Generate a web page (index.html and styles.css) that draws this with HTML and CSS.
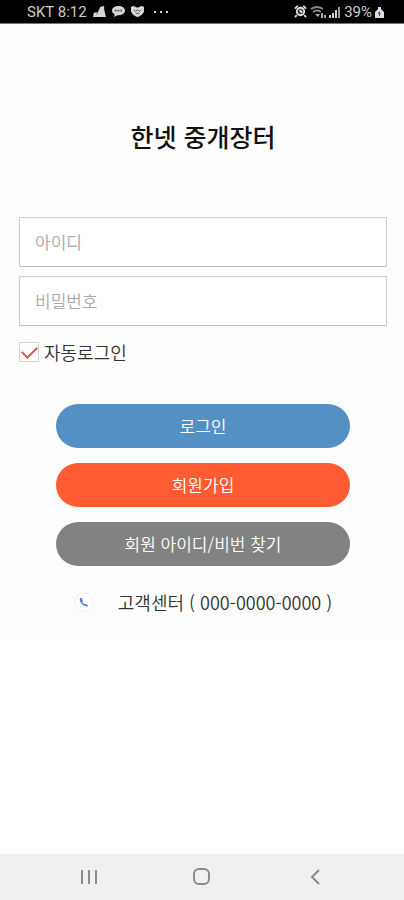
FILE: index.html
```html
<!DOCTYPE html>
<html lang="ko">
<head>
<meta charset="utf-8">
<meta name="viewport" content="width=device-width, initial-scale=1">
<title>한넷 중개장터</title>
<link rel="stylesheet" href="styles.css">
</head>
<body>
<header class="status">
  <div class="status-group">
    <span>SKT 8:12</span>
    <svg class="status-icon" viewBox="0 0 14 14" aria-hidden="true"><path fill="#d6d6d6" d="M0 13 1 8 5 8 8 2 12 1 12 5 14 13Z"/><path d="M3 11 6 8" stroke="#888"/></svg>
    <svg class="status-icon" viewBox="0 0 14 14" aria-hidden="true"><path fill="#d6d6d6" d="M7 1C3 1 0 3 0 6c0 2 1 3 3 4l-1 3 4-2h1c4 0 7-2 7-5S11 1 7 1Z"/><path d="M3 6h8" stroke="#555" stroke-width="2" stroke-dasharray="2 1"/></svg>
    <svg class="status-icon" viewBox="0 0 14 14" aria-hidden="true"><path fill="#d6d6d6" d="M0 2l3-1 4 2 4-2 3 1v5c-1 3-4 5-7 6-3-1-6-3-7-6Z"/><path d="M3 5l2 2 2-2 2 2 2-2M5 9h4" fill="none" stroke="#555"/></svg>
    <svg class="status-more" viewBox="0 0 14 14" aria-hidden="true"><path fill="#d6d6d6" d="M0 6h2v2H0zM6 6h2v2H6zM12 6h2v2h-2z"/></svg>
  </div>
  <div class="status-group status-right">
    <svg class="status-icon" viewBox="0 0 14 14" aria-hidden="true"><circle cx="7" cy="7" r="4" fill="#333" stroke="#e0e0e0" stroke-width="2"/><path d="M1 4l3-3M13 4l-3-3M3 11l-2 2M11 11l2 2M7 5v2l2 1" fill="none" stroke="#e0e0e0" stroke-width="2"/></svg>
    <svg class="status-wifi" viewBox="0 0 16 14" aria-hidden="true"><path d="M1 4q6-4 12 0M3 7q4-3 8 0" fill="none" stroke="#888" stroke-width="2"/><path fill="#aaa" d="M5 9h5l-2 3zM11 8h2v5h-2zM14 10h2v3h-2z"/></svg>
    <svg class="status-signal" viewBox="0 0 12 14" aria-hidden="true"><path d="M1 10v3M4 8v5M7 5v8" stroke="#ccc" stroke-width="2"/><path d="M10 2v11" stroke="#999" stroke-width="2"/></svg>
    <span>39%</span>
    <svg class="status-battery" viewBox="0 0 9 14" aria-hidden="true"><path fill="#ddd" d="M3 2h3v2l3 3v6H0V7l3-3z"/><path fill="#555" d="M4 6 6 9H5v2H4V9H3z"/></svg>
  </div>
</header>
<main class="page">
  <form class="login">
    <h1 class="title">한넷 중개장터</h1>
    <div class="fields">
      <input class="field" type="text" placeholder="아이디" aria-label="아이디">
      <input class="field" type="password" placeholder="비밀번호" aria-label="비밀번호">
    </div>
    <label class="auto"><input class="check" type="checkbox" checked>자동로그인</label>
    <div class="actions">
      <button class="button blue" type="submit">로그인</button>
      <button class="button orange" type="button">회원가입</button>
      <button class="button gray" type="button">회원 아이디/비번 찾기</button>
    </div>
    <a class="support" href="tel:000-0000-0000">
      <svg class="phone" viewBox="0 0 20 20" aria-hidden="true"><circle cx="10" cy="10" r="9" fill="#fff" stroke="#eeeff2"/><path fill="#5585cf" d="M6 6l2 0 1 3-1 1 2 2 1 0 3 1 0 1c-1 1-3 0-5-1-2-2-4-4-3-7Z"/></svg>
      <span>고객센터 ( 000-0000-0000 )</span>
    </a>
  </form>
</main>
<nav class="system">
  <button class="system-key" type="button" aria-label="최근 앱"><svg class="key-icon" viewBox="0 0 18 18"><path d="M2 2v14M9 2v14M16 2v14" stroke="#8c8c8c" stroke-width="2"/></svg></button>
  <button class="system-key" type="button" aria-label="홈"><svg class="key-icon" viewBox="0 0 18 18"><rect x="1" y="1" width="15" height="15" rx="5" fill="none" stroke="#8c8c8c" stroke-width="2"/></svg></button>
  <button class="system-key" type="button" aria-label="뒤로"><svg class="key-icon" viewBox="0 0 18 18"><path d="M13 2 6 9l7 7" fill="none" stroke="#8c8c8c" stroke-width="2"/></svg></button>
</nav>
</body>
</html>
```
FILE: styles.css
```css
* {
  box-sizing: border-box;
}

body {
  margin: 0;
  min-height: 100vh;
  display: flex;
  flex-direction: column;
  background: #fff;
  color: #333;
  font-family: "Noto Sans CJK KR", sans-serif;
  font-weight: 350;
  font-size: 17px;
}

input,
button {
  font: inherit;
}

.status {
  height: 24px;
  padding: 0 20px 0 27px;
  display: flex;
  justify-content: space-between;
  align-items: center;
  background: #000;
  border-bottom: 1px solid #777;
  color: #ccc;
  font-family: Roboto, sans-serif;
  font-weight: 400;
  font-size: 15px;
  line-height: 24px;
}

.status-group {
  display: flex;
  align-items: center;
  gap: 6px;
}

.status-right {
  gap: 3px;
}

.status-icon {
  width: 13px;
  height: 13px;
}

.status-more {
  width: 14px;
  height: 14px;
  margin-left: 4px;
}

.status-wifi {
  width: 16px;
  height: 14px;
}

.status-signal {
  width: 12px;
  height: 14px;
}

.status-battery {
  width: 9px;
  height: 14px;
}

.page {
  flex: 1;
}

.login {
  padding: 92px 17px 20px 19px;
  background: #fdfdfd;
}

.title {
  margin: 0;
  color: #111;
  font-size: 25px;
  font-weight: 500;
  line-height: 40px;
  text-align: center;
}

.fields {
  margin-top: 61px;
  display: grid;
  gap: 9px;
}

.field {
  width: 100%;
  height: 50px;
  padding: 0 15px 2px;
  border: 1px solid #ccc;
  border-bottom-color: #bbb;
  border-radius: 1px;
  background: #fff;
  outline: 0;
}

.field::placeholder {
  color: #aaa;
  opacity: 1;
}

.auto {
  margin-top: 12px;
  display: flex;
  align-items: center;
  gap: 5px;
  line-height: 28px;
  font-size: 18px;
}

.check {
  appearance: none;
  width: 20px;
  height: 20px;
  margin: 0;
  border: 1px solid #d5d5d5;
  background: #fff;
  display: grid;
  place-items: center;
}

.check:checked::before {
  content: "";
  width: 13px;
  height: 7px;
  margin-bottom: 4px;
  border: solid #e0584e;
  border-width: 0 0 2px 2px;
  transform: rotate(-45deg);
}

.actions {
  margin: 38px 37px 0;
  display: grid;
  gap: 15px;
}

.button {
  height: 44px;
  padding: 0 0 2px;
  border: 0;
  border-radius: 22px;
  color: #fff;
}

.blue {
  background: #5590c4;
}

.orange {
  background: #ff5c33;
}

.gray {
  background: #828282;
}

.support {
  margin-top: 22px;
  display: flex;
  align-items: center;
  justify-content: center;
  gap: 24px;
  color: inherit;
  font-size: 18px;
  line-height: 28px;
  text-decoration: none;
}

.phone {
  width: 20px;
  height: 20px;
}

.system {
  height: 46px;
  padding: 0 32px;
  display: grid;
  grid-template-columns: repeat(3, 1fr);
  background: #f0f0f0;
}

.system-key {
  padding: 0;
  border: 0;
  background: none;
  display: grid;
  place-items: center;
}

.key-icon {
  width: 18px;
  height: 18px;
}
```
